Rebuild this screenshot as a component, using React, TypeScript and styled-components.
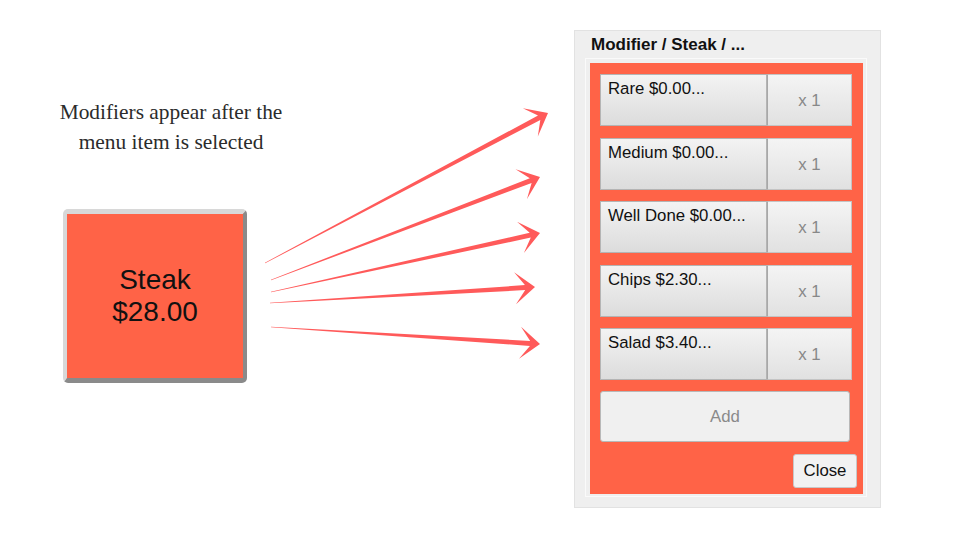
import React from "react";
import styled, { createGlobalStyle } from "styled-components";

const GlobalStyle = createGlobalStyle`
  html, body {
    margin: 0;
    padding: 0;
    background: #ffffff;
  }
  body {
    font-family: "Liberation Sans", Arial, sans-serif;
  }
`;

const Page = styled.div`
  display: flex;
  align-items: flex-start;
  width: 960px;
  height: 540px;
  overflow: hidden;
`;

const LeftColumn = styled.div`
  width: 262px;
  flex-shrink: 0;
  display: flex;
  flex-direction: column;
`;

const Caption = styled.p`
  margin: 97px 0 0 59px;
  width: 224px;
  font-family: "Liberation Serif", "Times New Roman", serif;
  font-size: 21.4px;
  line-height: 30px;
  color: #2b2b2b;
  text-align: center;
  white-space: nowrap;
`;

const MenuTile = styled.div`
  box-sizing: border-box;
  margin: 52px 0 0 63px;
  width: 184px;
  height: 174px;
  display: flex;
  flex-direction: column;
  align-items: center;
  justify-content: center;
  background: #ff6347;
  border-style: solid;
  border-width: 5px 4px 5px 4px;
  border-color: #d8d8d8 #8a8a8a #8a8a8a #d8d8d8;
  border-radius: 5px;
  font-size: 28px;
  line-height: 32px;
  color: #111;
  text-align: center;
`;

const ArrowLayer = styled.svg`
  flex-shrink: 0;
  margin-top: 100px;
  display: block;
`;

const Panel = styled.div`
  box-sizing: border-box;
  margin: 30px 0 0 22px;
  width: 307px;
  height: 478px;
  background: #efefef;
  border: 1px solid #e2e2e2;
  display: flex;
  flex-direction: column;
  padding: 0 13px 10px 10px;
`;

const PanelTitle = styled.div`
  height: 27px;
  display: flex;
  align-items: center;
  padding-left: 6px;
  font-size: 17px;
  font-weight: bold;
  color: #111;
  white-space: nowrap;
`;

const Frame = styled.div`
  flex: 1;
  display: flex;
  border: 1px solid #fafafa;
  padding: 4px 3px 2px 4px;
`;

const Sheet = styled.div`
  flex: 1;
  display: flex;
  flex-direction: column;
  background: #ff6347;
  padding: 11px 6px 6px 10px;
`;

const Rows = styled.div`
  display: flex;
  flex-direction: column;
  gap: 11.5px;
  width: 252px;
`;

const Row = styled.div`
  display: flex;
  height: 52px;
`;

const NameButton = styled.div`
  box-sizing: border-box;
  width: 167px;
  height: 100%;
  padding: 4px 7px;
  background: linear-gradient(#f3f3f3, #dcdcdc);
  border: 1px solid #b4b4b4;
  font-size: 16.8px;
  color: #111;
  white-space: nowrap;
`;

const QtyButton = styled.div`
  box-sizing: border-box;
  flex: 1;
  height: 100%;
  display: flex;
  align-items: center;
  justify-content: center;
  padding-top: 2px;
  background: linear-gradient(#f4f4f4, #e1e1e1);
  border: 1px solid #c4c4c4;
  border-left-color: #a8a8a8;
  font-size: 16.8px;
  color: #888;
`;

const AddButton = styled.div`
  box-sizing: border-box;
  margin-top: 11px;
  width: 250px;
  height: 51px;
  display: flex;
  align-items: center;
  justify-content: center;
  background: #f0f0f0;
  border: 1px solid #b8b8b8;
  border-radius: 3px;
  font-size: 16.8px;
  color: #8a8a8a;
`;

const CloseButton = styled.div`
  box-sizing: border-box;
  align-self: flex-end;
  margin-top: 12px;
  width: 64px;
  height: 34px;
  display: flex;
  align-items: center;
  justify-content: center;
  background: #f2f2f2;
  border: 1px solid #c8c8c8;
  border-radius: 3px;
  font-size: 16.8px;
  color: #111;
`;

interface Modifier {
  name: string;
  qty: number;
}

const modifiers: Modifier[] = [
  { name: "Rare $0.00...", qty: 1 },
  { name: "Medium $0.00...", qty: 1 },
  { name: "Well Done $0.00...", qty: 1 },
  { name: "Chips $2.30...", qty: 1 },
  { name: "Salad $3.40...", qty: 1 },
];

// arrow tails and tips, in page coordinates
const arrows = [
  { tail: [265, 263], tip: [548, 113] },
  { tail: [271, 280], tip: [540, 177] },
  { tail: [271, 292], tip: [540, 233] },
  { tail: [270, 303], tip: [535, 287] },
  { tail: [271, 327], tip: [540, 344] },
];

const OX = 262;
const OY = 100;

const arrowPoints = (tail: number[], tip: number[]) => {
  const px = tip[0] - OX;
  const py = tip[1] - OY;
  const dx = tip[0] - tail[0];
  const dy = tip[1] - tail[1];
  const len = Math.hypot(dx, dy);
  const ux = dx / len;
  const uy = dy / len;
  const nx = -uy;
  const ny = ux;
  const pt = (back: number, side: number) =>
    `${(px - ux * back + nx * side).toFixed(1)},${(py - uy * back + ny * side).toFixed(1)}`;
  return [
    pt(0, 0),
    pt(20, 16),
    pt(10, 2.5),
    pt(len, 0.3),
    pt(len, -0.3),
    pt(10, -2.5),
    pt(20, -16),
  ].join(" ");
};

const Arrows: React.FC = () => (
  <ArrowLayer width={290} height={265} viewBox="0 0 290 265">
    {arrows.map((a, i) => (
      <polygon key={i} points={arrowPoints(a.tail, a.tip)} fill="#ff5a5a" />
    ))}
  </ArrowLayer>
);

const App: React.FC = () => {
  return (
    <>
      <GlobalStyle />
      <Page>
        <LeftColumn>
          <Caption>
            Modifiers appear after the
            <br />
            menu item is selected
          </Caption>
          <MenuTile>
            <div>Steak</div>
            <div>$28.00</div>
          </MenuTile>
        </LeftColumn>
        <Arrows />
        <Panel>
          <PanelTitle>Modifier / Steak / ...</PanelTitle>
          <Frame>
            <Sheet>
              <Rows>
                {modifiers.map((m) => (
                  <Row key={m.name}>
                    <NameButton>{m.name}</NameButton>
                    <QtyButton>x {m.qty}</QtyButton>
                  </Row>
                ))}
              </Rows>
              <AddButton>Add</AddButton>
              <CloseButton>Close</CloseButton>
            </Sheet>
          </Frame>
        </Panel>
      </Page>
    </>
  );
};

export default App;
